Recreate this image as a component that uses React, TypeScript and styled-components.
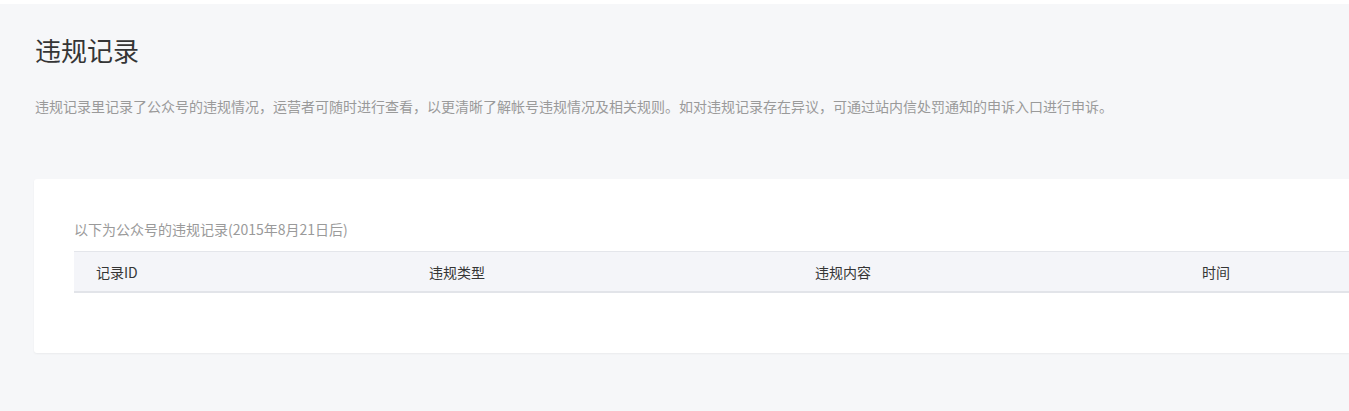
import React from "react";
import styled, { createGlobalStyle } from "styled-components";

const GlobalStyle = createGlobalStyle`
  html, body {
    margin: 0;
    padding: 0;
    background: #ffffff;
    overflow: hidden;
  }
  body {
    font-family: "Noto Sans CJK SC", "Noto Sans", sans-serif;
    color: #353535;
  }
`;

const Page = styled.div`
  margin-top: 4px;
  min-height: 407px;
  background: #f6f7f9;
  padding: 29px 0 0 34px;
  box-sizing: border-box;
`;

const Title = styled.h2`
  margin: 0 0 0 1px;
  font-size: 26px;
  line-height: 34px;
  font-weight: 400;
  color: #353535;
`;

const Desc = styled.p`
  margin: 28px 0 0 1px;
  font-size: 14px;
  line-height: 22px;
  color: #9a9a9a;
  white-space: nowrap;
`;

/* the card runs on past the right edge of the window, so no right corners */
const Card = styled.section`
  margin-top: 62px;
  height: 174px;
  background: #ffffff;
  border-radius: 3px 0 0 3px;
  box-shadow: 0 1px 2px rgba(0, 0, 0, 0.05);
  padding: 40px 0 0 40px;
  box-sizing: border-box;
`;

const Caption = styled.div`
  font-size: 14px;
  line-height: 20px;
  color: #9a9a9a;
`;

const HeadRow = styled.div`
  margin-top: 12px;
  display: grid;
  grid-template-columns: 333px 386px 387px 1fr;
  height: 42px;
  box-sizing: border-box;
  background: #f4f5f9;
  border-top: 1px solid #e4e6eb;
  border-bottom: 2px solid #e2e4e9;
  align-items: center;
`;

const HeadCell = styled.div`
  padding-left: 22px;
  font-size: 14px;
  color: #353535;
`;

const columns = ["记录ID", "违规类型", "违规内容", "时间"];

export default function App() {
  return (
    <>
      <GlobalStyle />
      <Page>
        <Title>违规记录</Title>
        <Desc>
          违规记录里记录了公众号的违规情况，运营者可随时进行查看，以更清晰了解帐号违规情况及相关规则。如对违规记录存在异议，可通过站内信处罚通知的申诉入口进行申诉。
        </Desc>
        <Card>
          <Caption>以下为公众号的违规记录(2015年8月21日后)</Caption>
          <HeadRow>
            {columns.map((c) => (
              <HeadCell key={c}>{c}</HeadCell>
            ))}
          </HeadRow>
        </Card>
      </Page>
    </>
  );
}
